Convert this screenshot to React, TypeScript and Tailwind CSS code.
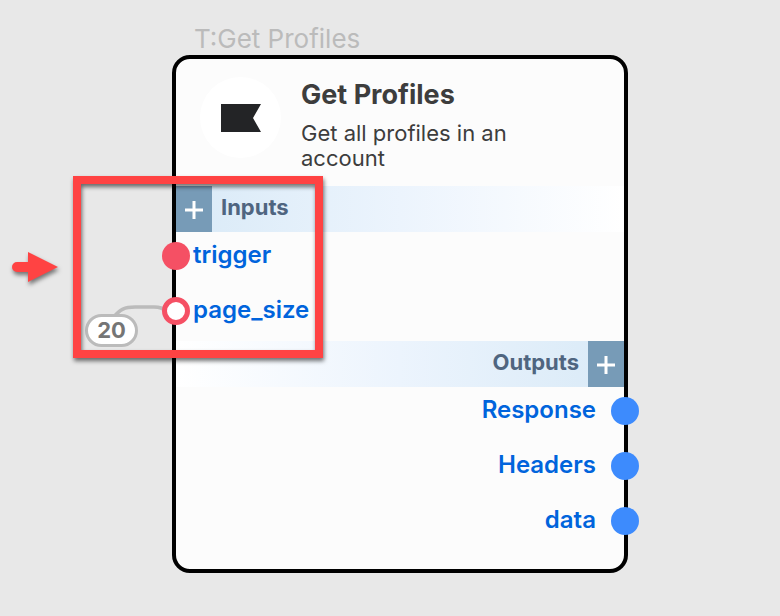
import React from "react";

type Port = { name: string; connected: boolean };

const inputs: Port[] = [
  { name: "trigger", connected: true },
  { name: "page_size", connected: false },
];
const outputs = ["Response", "Headers", "data"];

function PlusIcon() {
  return (
    <svg width="18" height="18" viewBox="0 0 18 18" aria-hidden="true">
      <path d="M9 0V18M0 9H18" stroke="#fff" strokeWidth="3" fill="none" />
    </svg>
  );
}

function AddButton({ label }: { label: string }) {
  return (
    <button
      type="button"
      aria-label={label}
      className="flex h-full w-9 items-center justify-center bg-[#779bb7] pt-[2px]"
    >
      <PlusIcon />
    </button>
  );
}

function InputRow({ port }: { port: Port }) {
  return (
    <li className="-ml-[14px] flex h-12 items-center gap-[3px]">
      <span
        className={
          port.connected
            ? "size-7 shrink-0 rounded-full bg-[#f55064]"
            : "size-7 shrink-0 rounded-full border-5 border-[#f55064] bg-white"
        }
      />
      <span className="pb-[2px]">{port.name}</span>
    </li>
  );
}

function OutputRow({ name }: { name: string }) {
  return (
    <li className="-mr-[15px] flex h-12 items-center justify-end gap-[15px]">
      <span className="pb-[2px]">{name}</span>
      <span className="size-7 shrink-0 rounded-full bg-[#3d8bfd]" />
    </li>
  );
}

function NodeCard() {
  return (
    <article className="w-[456px] rounded-[18px] border-4 border-black bg-[#fcfcfc]">
      <header className="flex items-start gap-5 px-6 pt-[18px]">
        <div className="flex size-[81px] shrink-0 items-center justify-center rounded-full bg-white">
          <svg width="40" height="28" viewBox="0 0 40 28" aria-hidden="true">
            <path d="M0 0H40L32 14L40 28H0Z" fill="#232426" />
          </svg>
        </div>
        <div className="h-[109px] w-[240px] text-[#3d3d3d]">
          <h1 className="text-[27px] leading-9 font-bold">Get Profiles</h1>
          <p className="pt-2 text-[22px] leading-[25px]">Get all profiles in an account</p>
        </div>
      </header>
      <section aria-label="Inputs">
        <div className="flex h-[46px] items-center bg-linear-to-r from-[#d9eaf7] via-[#ecf4fd] to-white">
          <AddButton label="Add input" />
          <h2 className="px-[9px] pb-1 text-[22px] leading-7 font-bold text-[#4f6580]">Inputs</h2>
        </div>
        <ul className="flex flex-col gap-[7px] pb-[6px] text-2xl font-semibold text-[#0064dc]">
          {inputs.map((port) => (
            <InputRow key={port.name} port={port} />
          ))}
        </ul>
      </section>
      <section aria-label="Outputs">
        <div className="flex h-[46px] items-center justify-end bg-linear-to-l from-[#d9eaf7] via-[#ecf4fd] to-white">
          <h2 className="px-[9px] pb-1 text-[22px] leading-7 font-bold text-[#4f6580]">Outputs</h2>
          <AddButton label="Add output" />
        </div>
        <ul className="flex flex-col gap-[7px] pb-6 text-2xl font-semibold text-[#0064dc]">
          {outputs.map((name) => (
            <OutputRow key={name} name={name} />
          ))}
        </ul>
      </section>
    </article>
  );
}

export default function App() {
  return (
    <main className="relative min-h-screen overflow-hidden bg-[#e8e8e8] font-['Inter',sans-serif]">
      <svg className="absolute top-[300px] left-[108px]" width="62" height="24" viewBox="0 0 62 24" aria-hidden="true">
        <path d="M5 18C12 9 17 7 27 7H46C52 7 54 8 60 12" stroke="#bbb" strokeWidth="3.5" fill="none" />
      </svg>
      <div className="absolute top-[23px] left-[172px]">
        <p className="pl-[22px] text-[26px] leading-8 text-[#bbb]">T:Get Profiles</p>
        <NodeCard />
      </div>
      <div className="absolute top-[314px] left-[85px] flex h-[33px] w-[53px] items-center justify-center rounded-full border-3 border-[#bbb] bg-white text-[22px] font-bold text-[#757575]">
        20
      </div>
      <div className="absolute top-[176px] left-[73px] h-[182px] w-[250px] border-8 border-[#ff4343] drop-shadow-[1px_3px_2px_rgba(0,0,0,0.55)]" />
      <svg
        className="absolute top-[252px] left-[12px] overflow-visible drop-shadow-[1px_3px_2px_rgba(0,0,0,0.5)]"
        width="46"
        height="30"
        viewBox="0 0 46 30"
        aria-hidden="true"
      >
        <path d="M5 10H16V0L46 15L16 30V20H5A5 5 0 0 1 5 10Z" fill="#ff4343" />
      </svg>
    </main>
  );
}
